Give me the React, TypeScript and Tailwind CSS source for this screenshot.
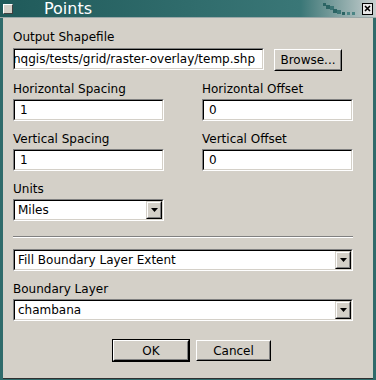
import React from 'react';

const font = "font-['DejaVu_Sans',sans-serif]";

const Sunken: React.FC<{ className?: string; children?: React.ReactNode }> = ({ className = '', children }) => (
  <div className={`border border-t-[#808080] border-l-[#808080] border-b-white border-r-white ${className}`}>
    <div className="h-full border border-t-black border-l-black border-b-[#d4d0c8] border-r-[#d4d0c8] bg-white flex items-center overflow-hidden">
      {children}
    </div>
  </div>
);

const Raised: React.FC<{ className?: string; children?: React.ReactNode; isDefault?: boolean }> = ({ className = '', children, isDefault }) => (
  <div className={`${isDefault ? 'border border-black' : ''} ${className}`}>
    <div className="h-full border border-t-white border-l-white border-b-black border-r-black">
      <div className="h-full border border-t-[#d4d0c8] border-l-[#d4d0c8] border-b-[#808080] border-r-[#808080] bg-[#d4d0c8] flex items-center justify-center text-[12px] text-black">
        {children}
      </div>
    </div>
  </div>
);

const Arrow = () => (
  <div className="w-[16px] h-full border border-t-[#d4d0c8] border-l-[#d4d0c8] border-b-black border-r-black">
    <div className="h-full border border-t-white border-l-white border-b-[#808080] border-r-[#808080] bg-[#d4d0c8] flex items-center justify-center">
      <svg width="7" height="4" viewBox="0 0 7 4"><polygon points="0,0 7,0 3.5,4" fill="#000" /></svg>
    </div>
  </div>
);

const Combo: React.FC<{ value: string; className?: string }> = ({ value, className = '' }) => (
  <Sunken className={`h-[22px] ${className}`}>
    <span className="flex-1 pl-[3px] text-[12px] text-black whitespace-nowrap">{value}</span>
    <Arrow />
  </Sunken>
);

const Field: React.FC<{ label: string; value: string }> = ({ label, value }) => (
  <div className="w-[151px]">
    <div className="leading-[14px] text-[12px] text-black">{label}</div>
    <Sunken className="mt-[3px] h-[22px]">
      <span className="pl-[5px] text-[12px] text-black">{value}</span>
    </Sunken>
  </div>
);

const App: React.FC = () => {
  return (
    <div className={`w-[376px] h-[380px] bg-[#2f6b6b] flex flex-col ${font}`}>
      {/* Title bar */}
      <div className="h-[18px] flex items-center bg-gradient-to-r from-[#1f5a5a] via-[#3a7777] via-80% to-[#c8d0d0] border-b border-[#9aa8a8]">
        <div className="ml-[3px] w-[10px] h-[10px] bg-[#d4d0c8] border border-t-white border-l-white border-b-[#404040] border-r-[#404040]" />
        <span className="ml-[31px] text-[16px] leading-[18px] text-white">Points</span>
        <div className="flex-1" />
        <svg width="34" height="17" viewBox="0 0 34 17" className="mr-[5px]">
          <rect x="0" y="3" width="3" height="3" fill="#2b6464" />
          <rect x="3" y="5" width="4" height="4" fill="#2b6464" />
          <rect x="7" y="6" width="4" height="4" fill="#3b7474" />
          <rect x="10" y="9" width="4" height="4" fill="#2b6464" />
          <rect x="14" y="10" width="4" height="4" fill="#3b7474" />
          <rect x="19" y="12" width="3" height="3" fill="#2b6464" />
          <rect x="24" y="12" width="3" height="3" fill="#4a8484" />
          <rect x="29" y="12" width="3" height="3" fill="#4a8484" />
        </svg>
        <div className="mr-[3px] w-[11px] h-[12px] bg-[#e8e8e8] border border-black flex items-center justify-center">
          <svg width="7" height="7" viewBox="0 0 7 7"><path d="M1 1L6 6M6 1L1 6" stroke="#000" strokeWidth="1.6" /></svg>
        </div>
      </div>

      {/* Body */}
      <div className="flex-1 ml-[3px] mr-[3px] mb-[1px] bg-[#d4d0c8] border-b border-[#303030] pl-[10px] pr-[20px] text-[12px] text-black">
        <div className="mt-[12px] leading-[14px]">Output Shapefile</div>
        <div className="mt-[4px] flex items-start">
          <Sunken className="w-[251px] h-[22px]">
            <div className="w-full flex justify-end overflow-hidden pr-[7px]">
              <span className="whitespace-nowrap">/home/user/devnqgis/tests/grid/raster-overlay/temp.shp</span>
            </div>
          </Sunken>
          <Raised className="ml-[10px] mt-[1px] w-[68px] h-[22px]">Browse...</Raised>
        </div>

        <div className="mt-[11px] flex justify-between">
          <Field label="Horizontal Spacing" value="1" />
          <Field label="Horizontal Offset" value="0" />
        </div>
        <div className="mt-[11px] flex justify-between">
          <Field label="Vertical Spacing" value="1" />
          <Field label="Vertical Offset" value="0" />
        </div>

        <div className="mt-[11px] leading-[14px]">Units</div>
        <Combo value="Miles" className="mt-[3px] w-[151px]" />

        <div className="mt-[15px] h-[2px] border-t border-[#808080] border-b border-b-white" />

        <Combo value="Fill Boundary Layer Extent" className="mt-[11px]" />

        <div className="mt-[11px] leading-[14px]">Boundary Layer</div>
        <Combo value="chambana" className="mt-[3px]" />

        <div className="mt-[18px] flex justify-center gap-[6px] pl-[17px]">
          <Raised isDefault className="w-[78px] h-[23px]">OK</Raised>
          <Raised className="mt-[1px] w-[75px] h-[21px]">Cancel</Raised>
        </div>
      </div>
    </div>
  );
};

export default App;
